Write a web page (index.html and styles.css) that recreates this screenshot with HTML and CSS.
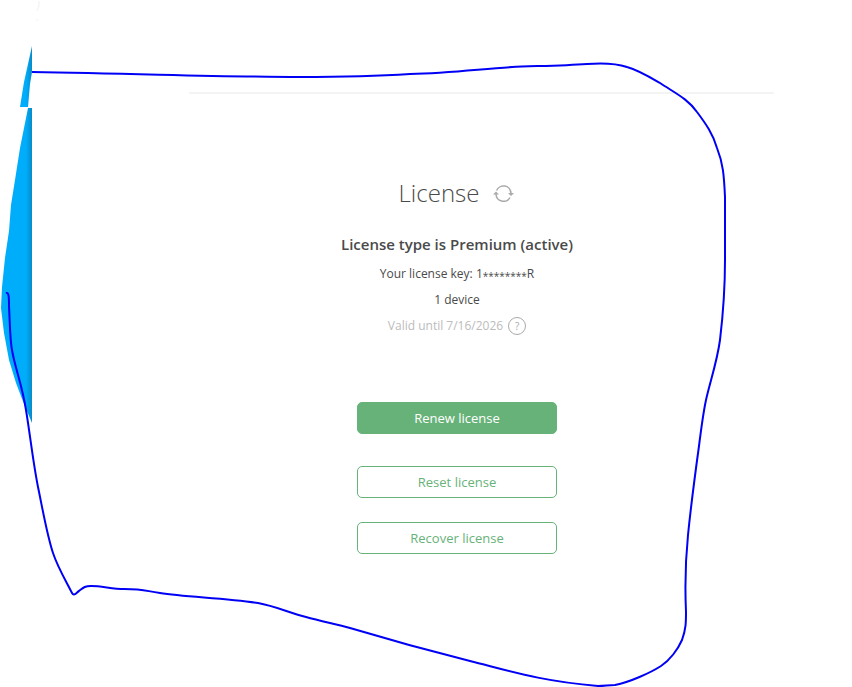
FILE: index.html
```
<!DOCTYPE html>
<html lang="en">
<head>
    <meta charset="UTF-8">
    <meta name="viewport" content="width=device-width, initial-scale=1.0">
    <title>License</title>
    <link rel="stylesheet" href="styles.css">
</head>
<body>
    <svg class="sketch" width="852" height="687" viewBox="0 0 852 687" aria-hidden="true">
        <defs>
            <linearGradient id="edge" gradientUnits="userSpaceOnUse" x1="26" y1="0" x2="32" y2="0">
                <stop offset="0" stop-color="#00adfb"/>
                <stop offset="1" stop-color="#078bc8"/>
            </linearGradient>
        </defs>
        <path class="faint" d="M39 1v5l-2 5M37 19v2"/>
        <path class="shape" d="M32 46V72L30 84L28 107H20L24 82Z"/>
        <path class="shape" d="M32 108V423L24 404L16 383L9 360L4 333L1 308L2 287L5 258L9 231L11 205L15 180L20 148L24 128L28 108Z"/>
        <path class="stroke" d="M6 293C9 292 9 298 9 306C10 325 10 340 12 350C15 368 22 384 26 410C30 434 33 462 38 487C43 511 47 535 53 553C58 568 66 581 72 593C74 597 77 592 79 591C83 588 84 586 91 586C102 586 112 589 124 589C145 589 145 591 160 593C185 597 225 598 258 603C275 606 290 613 306 617C320 621 335 624 350 628C380 637 430 651 470 661C510 671 540 681 598 686C605 686 608 685 615 685C630 682 650 673 661 666C670 660 678 649 682 640C686 629 686 622 686 612C685 590 685 565 688 535C691 505 695 475 699 446C701 430 703 414 706 400C710 382 717 362 720 340C723 315 725 290 725 260V197C724 175 723 163 717 148C713 134 706 124 697 112C688 99 675 93 660 83C648 76 638 70 627 67C615 63 600 63 587 64C560 66 530 66 512 67C480 69 450 73 410 74C380 76 340 77 300 77C230 77 150 74 32 72"/>
    </svg>

    <main class="page">
        <hr class="divider">

        <section class="license">
            <header class="title">
                <h1>License</h1>
                <button class="refresh" type="button" aria-label="Refresh license">
                    <svg width="22" height="18" viewBox="0 0 22 18">
                        <path class="arc" d="M3.600 6.500A7.500 7.500 0 0 1 18 9.500M17 13.500A7.500 7.500 0 0 1 3 10"/>
                        <path class="tip" d="M15 9H21L18 12ZM0 10.500H6L3 7.500Z"/>
                    </svg>
                </button>
            </header>

            <h2>License type is Premium (active)</h2>
            <p>Your license key: 1<span class="mask">********</span>R</p>
            <p>1 device</p>
            <p class="valid">
                Valid until 7/16/2026
                <button class="help" type="button" aria-label="Help">?</button>
            </p>

            <div class="buttons">
                <button class="primary" type="button">Renew license</button>
                <button type="button">Reset license</button>
                <button type="button">Recover license</button>
            </div>
        </section>
    </main>
</body>
</html>
```
FILE: styles.css
```
* {
    box-sizing: border-box;
}

body {
    margin: 0;
    background-color: #fff;
    color: #4a4a4a;
    font-family: 'Open Sans', 'Noto Sans', sans-serif;
    font-size: 12px;
}

h1, h2, p {
    margin: 0;
}

button {
    padding: 0;
    background: none;
    font-family: inherit;
    cursor: pointer;
}

/* hand-drawn outline laid over the page */
.sketch {
    position: absolute;
    top: 0;
    left: 0;
    pointer-events: none;
}

.shape {
    fill: url(#edge);
}

.stroke {
    fill: none;
    stroke: #0000f5;
    stroke-width: 2;
}

.faint {
    fill: none;
    stroke: #f0f0f0;
}

.page {
    padding: 92px 0 0 62px;
}

.divider {
    height: 2px;
    margin: 0 78px 0 127px;
    border: none;
    border-radius: 2px;
    background-color: #f3f3f3;
}

.license {
    display: flex;
    flex-direction: column;
    align-items: center;
    padding: 81px 0 32px;
}

.title {
    display: flex;
    align-items: center;
    gap: 14px;
    margin-bottom: 23px;
}

h1 {
    font-size: 24px;
    font-weight: 300;
    line-height: 36px;
}

.refresh {
    display: flex;
    border: none;
}

.arc {
    fill: none;
    stroke: #aaa;
    stroke-width: 1.5;
}

.tip {
    fill: #aaa;
}

h2 {
    margin-bottom: 7px;
    font-size: 15px;
    font-weight: 600;
    line-height: 20px;
}

p {
    line-height: 26px;
}

.mask {
    font-size: 10px;
    line-height: 1;
    vertical-align: -2px;
}

.valid {
    display: flex;
    align-items: center;
    gap: 5px;
    color: #bcbcbc;
}

.help {
    width: 18px;
    height: 18px;
    border: 1px solid #aaa;
    border-radius: 50%;
    color: #aaa;
    font-size: 10px;
    line-height: 16px;
}

.buttons {
    display: flex;
    flex-direction: column;
    gap: 24px;
    width: 200px;
    margin-top: 63px;
}

.buttons button {
    height: 32px;
    border: 1px solid #67b279;
    border-radius: 5px;
    color: #67b279;
    font-size: 13px;
}

.buttons .primary {
    margin-bottom: 8px;
    background-color: #67b279;
    color: #fff;
}
```
